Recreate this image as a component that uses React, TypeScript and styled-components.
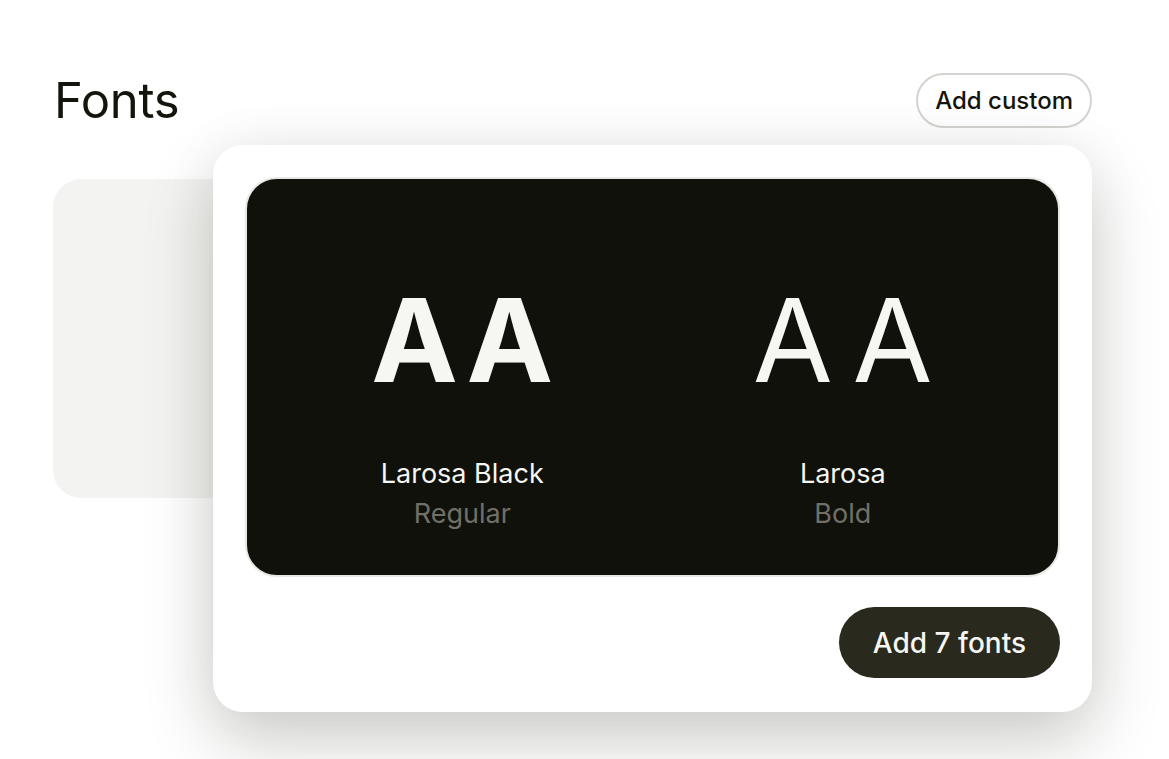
import React from 'react';
import styled, { createGlobalStyle } from 'styled-components';

const GlobalStyle = createGlobalStyle`
  html, body {
    margin: 0;
    padding: 0;
    background: #ffffff;
    font-family: Inter, "Noto Sans", "Liberation Sans", sans-serif;
    color: #14140c;
    overflow: hidden;
  }
`;

const Page = styled.div`
  width: 1169px;
  height: 759px;
  box-sizing: border-box;
  padding: 73px 77px 0 53px;
`;

const Header = styled.div`
  display: flex;
  align-items: center;
  justify-content: space-between;
  height: 55px;
`;

const Title = styled.h1`
  margin: 0 0 0 1px;
  font-size: 49px;
  font-weight: 400;
  letter-spacing: -0.3px;
  color: #14140c;
`;

const OutlineButton = styled.button`
  height: 55px;
  padding: 0 17px;
  border: 2px solid #d3d3cf;
  border-radius: 28px;
  background: #ffffff;
  font-family: inherit;
  font-size: 24px;
  font-weight: 500;
  color: #14140c;
`;

const Body = styled.div`
  position: relative;
  margin-top: 51px;
`;

const Grid = styled.div`
  display: grid;
  grid-template-columns: repeat(3, 320px);
  gap: 24px;
`;

const FontCard = styled.div`
  height: 319px;
  border-radius: 28px;
  background: #f3f3f1;
`;

const Popover = styled.div`
  position: absolute;
  left: 160px;
  top: -34px;
  width: 879px;
  height: 567px;
  box-sizing: border-box;
  padding: 32px 32px 34px 32px;
  display: flex;
  flex-direction: column;
  gap: 30px;
  background: #ffffff;
  border-radius: 30px;
  box-shadow: 0 30px 70px rgba(20, 20, 10, 0.2), 0 0 60px rgba(20, 20, 10, 0.05);
`;

const Preview = styled.div`
  height: 400px;
  box-sizing: border-box;
  display: grid;
  grid-template-columns: 1fr 1fr;
  padding: 0 25px;
  background: #10110a;
  border: 2px solid #e8e8e4;
  border-radius: 32px;
`;

const FontColumn = styled.div`
  display: flex;
  flex-direction: column;
  align-items: center;
  padding-top: 103px;
`;

// trailing letter-spacing is balanced with an equal left padding
const Sample = styled.div<{ $weight: number; $spacing: number }>`
  font-size: 116px;
  line-height: 116px;
  height: 116px;
  font-weight: ${(p) => p.$weight};
  letter-spacing: ${(p) => p.$spacing}px;
  padding-left: ${(p) => p.$spacing}px;
  color: #f6f6f3;
`;

const FontName = styled.div`
  margin-top: 56px;
  font-size: 27px;
  line-height: 40px;
  color: #f6f6f3;
`;

const FontStyle = styled.div`
  font-size: 27px;
  line-height: 40px;
  color: #707068;
`;

const Footer = styled.div`
  display: flex;
  justify-content: flex-end;
`;

const SolidButton = styled.button`
  height: 71px;
  padding: 0 34px;
  border: none;
  border-radius: 36px;
  background: #29291e;
  font-family: inherit;
  font-size: 28px;
  font-weight: 500;
  color: #f6f6f3;
`;

const fonts = [
  { name: 'Larosa Black', style: 'Regular', weight: 700, spacing: 7 },
  { name: 'Larosa', style: 'Bold', weight: 400, spacing: 18 },
];

export default function App() {
  return (
    <>
      <GlobalStyle />
      <Page>
        <Header>
          <Title>Fonts</Title>
          <OutlineButton>Add custom</OutlineButton>
        </Header>
        <Body>
          <Grid>
            <FontCard />
          </Grid>
          <Popover>
            <Preview>
              {fonts.map((f) => (
                <FontColumn key={f.name}>
                  <Sample $weight={f.weight} $spacing={f.spacing}>AA</Sample>
                  <FontName>{f.name}</FontName>
                  <FontStyle>{f.style}</FontStyle>
                </FontColumn>
              ))}
            </Preview>
            <Footer>
              <SolidButton>Add 7 fonts</SolidButton>
            </Footer>
          </Popover>
        </Body>
      </Page>
    </>
  );
}
